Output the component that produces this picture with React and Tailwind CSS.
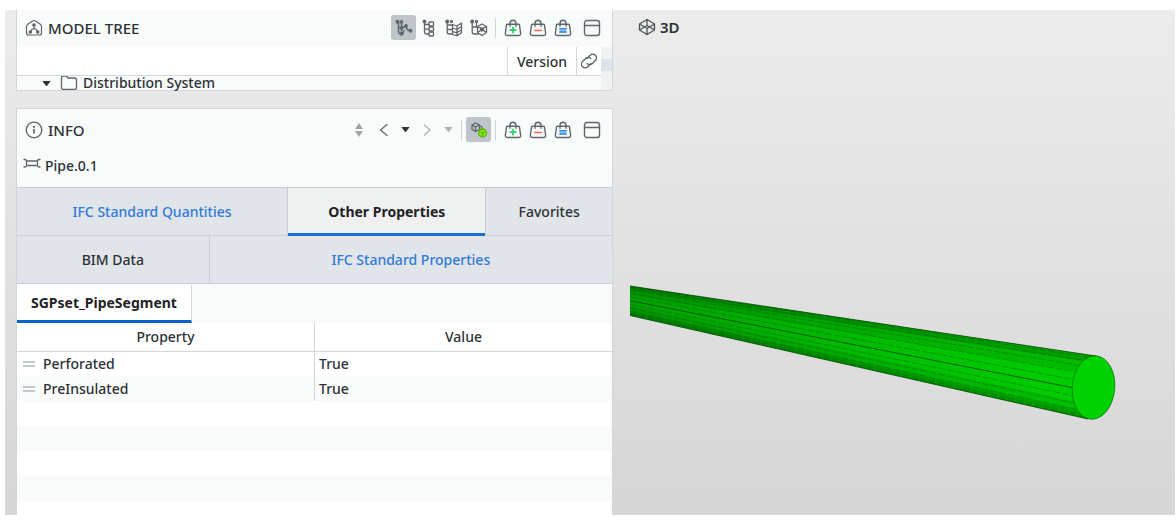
import React from 'react';
import clsx from 'clsx';

const Icon = ({ children, className = 'h-[18px] w-[18px]', strokeWidth = 1.3 }) => (
    <svg
        viewBox="0 0 18 18"
        fill="none"
        stroke="currentColor"
        strokeWidth={strokeWidth}
        strokeLinecap="round"
        strokeLinejoin="round"
        className={className}
        aria-hidden="true"
    >
        {children}
    </svg>
);

const ModelIcon = () => (
    <Icon strokeWidth={1.2}>
        <path d="M7.500 2q1.500-1 3 0l4.500 3q1.500 1 1.500 2.800v6.200q0 2-2 2h-11q-2 0-2-2V7.800q0-1.800 1.500-2.800Z" />
        <path d="M9 6.500v3M9 9.500q-3 .5-3.500 3.500M9 9.500q3 .5 3.500 3.500" />
        <circle cx="9" cy="6" r="1.200" fill="currentColor" />
        <circle cx="5.300" cy="13" r="1.200" fill="currentColor" />
        <circle cx="12.700" cy="13" r="1.200" fill="currentColor" />
    </Icon>
);

const InfoIcon = () => (
    <Icon>
        <circle cx="9" cy="9" r="7.800" />
        <path d="M9 8.500v3.300" strokeWidth="1.700" />
        <circle cx="9" cy="5.800" r="0.500" fill="currentColor" />
    </Icon>
);

const TreeContainmentIcon = () => (
    <Icon strokeWidth={1.5}>
        <circle cx="2.500" cy="2.800" r="1.300" fill="currentColor" />
        <circle cx="6.500" cy="2.800" r="1.100" />
        <path d="M3.500 4v8.500q0 2 2 2.500M3.500 8.500h2.500M6.500 4v8" />
        <circle cx="6.700" cy="9" r="1.100" fill="currentColor" />
        <circle cx="6.700" cy="14.800" r="1.200" fill="currentColor" />
        <path d="M7.500 8.500 11 7M11 7q0 4 4 4.500M7.500 14.500l1.500-3" />
        <circle cx="11" cy="7" r="1.200" fill="currentColor" />
        <circle cx="15.500" cy="11.700" r="1.200" fill="currentColor" />
    </Icon>
);

const TreeLayersIcon = () => (
    <Icon>
        <circle cx="4.500" cy="2.500" r="1.300" fill="currentColor" />
        <path d="M4.500 4v9q0 2 2 2h2.500M4.500 5.500H9M4.500 10.200H9" />
        <rect x="9" y="3" width="4.500" height="4" rx="0.800" />
        <rect x="9" y="8" width="4.500" height="4" rx="0.800" />
        <rect x="9" y="13" width="4.500" height="4" rx="0.800" />
    </Icon>
);

const TreeTypesIcon = () => (
    <Icon>
        <circle cx="2.200" cy="2.500" r="1.300" fill="currentColor" />
        <circle cx="6.500" cy="2.500" r="1" />
        <path d="M2.200 4v9q0 2 2 2h3M2.200 6h5M2.200 10.500h5" />
        <path d="M7.500 5.500 12 7l4.500-3v3.500L12 10.500 7.500 9ZM7.500 9v3.500L12 13.800l4.500-3V7.500M7.500 12.500v3l4.500 1.300 4.500-3v-3M12 7v9.500" />
    </Icon>
);

const TreeSystemIcon = () => (
    <Icon>
        <circle cx="2.200" cy="2.500" r="1.300" fill="currentColor" />
        <circle cx="6.500" cy="2.500" r="1" />
        <path d="M2.200 4v9q0 2 2 2h4M2.200 8h5M6.500 3.500v4" />
        <path d="M12 5 16.500 7.500v6L12 16.500 7.500 13.500v-6ZM7.500 7.500 12 10l4.500-2.500M7.500 13.500 12 10.500l4.500 3" />
        <circle cx="12" cy="10.500" r="1.500" fill="currentColor" />
    </Icon>
);

const BASKET_MARKS = {
    add: <path d="M9 8.300v5.400M6.300 11h5.400" stroke="#35cf70" strokeWidth="1.800" />,
    remove: <path d="M6 11.500h6" stroke="#ee6055" strokeWidth="1.700" />,
    set: (
        <>
            <rect x="5.500" y="9" width="7" height="5" fill="#7db8f3" stroke="none" />
            <path d="M5.700 9.500h6.600M5.700 13h6.600" stroke="#2c7fd8" strokeWidth="1.200" />
        </>
    ),
};

const BasketIcon = ({ mark }) => (
    <Icon strokeWidth={1.4}>
        <path d="M3.500 5.200h11q.8 0 1 .9l1.100 7.900q.3 2.500-2 2.500H3.400q-2.300 0-2-2.500l1.100-7.900q.2-.9 1-.9Z" />
        <path d="M6 7.200V4.500Q6 1.300 9 1.300t3 3.200v2.700" />
        {BASKET_MARKS[mark]}
    </Icon>
);

const WindowIcon = () => (
    <Icon strokeWidth={1.4}>
        <rect x="1.500" y="1.500" width="15" height="15" rx="2.500" />
        <path d="M1.500 6.500h15" />
    </Icon>
);

const LinkIcon = () => (
    <Icon strokeWidth={1.4}>
        <path d="m7 6.500 3.200-3.200a3.600 3.600 0 0 1 5.200 5.200l-3 3a3.600 3.600 0 0 1-5.200 0" />
        <path d="m11 11.500-3.200 3.200a3.600 3.600 0 0 1-5.200-5.200l3-3a3.600 3.600 0 0 1 5.200 0" />
    </Icon>
);

const CubeIcon = () => (
    <Icon>
        <path d="M9 1.500 16.500 6v6L9 16.500 1.500 12V6ZM1.500 6 9 10.500 16.500 6M1.500 12 9 7.500l7.500 4.500M9 1.500v6M9 10.500v6" />
    </Icon>
);

const FolderIcon = () => (
    <Icon>
        <path d="M1.500 4q0-2 2-2h3l1.500 2h6.500q2 0 2 2v7.500q0 2-2 2h-11q-2 0-2-2Z" />
    </Icon>
);

const PipeIcon = () => (
    <Icon>
        <path d="M3.500 6h11M3.500 10.500h11M1 4.500h1q1.500 0 1.500 1.500v4.500q0 1.500-1.500 1.500H1M17 4.500h-1q-1.500 0-1.500 1.500v4.500q0 1.500 1.500 1.500h1" />
    </Icon>
);

const SelectionIcon = () => (
    <Icon>
        <path d="M5.500 2 9.500 4v4.500l-4 2-3.500-2V4ZM2 4l3.500 2 4-2M5.500 6v4.500M9 4.500l3 1.500v3" />
        <circle cx="12.500" cy="12" r="4" fill="#7de315" stroke="#58b80b" />
        <path d="m10.500 11 2 1 2-1M12.500 12v2.500" stroke="#4c9f0b" strokeWidth="0.800" />
    </Icon>
);

const Caret = ({ className }) => (
    <svg viewBox="0 0 10 8" className={clsx('h-[7px] w-[9px]', className)} fill="currentColor" aria-hidden="true">
        <path d="M1 1h8q.8 0 .4.700L5.600 6.700q-.6.700-1.200 0L.6 1.700Q.2 1 1 1Z" />
    </svg>
);

const ToolButton = ({ label, active = false, narrow = false, className, children }) => (
    <button
        type="button"
        aria-label={label}
        title={label}
        className={clsx(
            'flex h-[25px] items-center justify-center rounded-[3px]',
            narrow ? 'w-[18px]' : 'w-[25px]',
            active && 'bg-[#bfc4cb]',
            className
        )}
    >
        {children}
    </button>
);

const Separator = () => <span className="mx-1 h-5 w-px bg-[#cfd3d8]" />;

const BasketTools = () => (
    <>
        <ToolButton label="Add to selection basket"><BasketIcon mark="add" /></ToolButton>
        <ToolButton label="Remove from selection basket"><BasketIcon mark="remove" /></ToolButton>
        <ToolButton label="Set selection basket"><BasketIcon mark="set" /></ToolButton>
        <ToolButton label="Float window" className="ml-1"><WindowIcon /></ToolButton>
    </>
);

const PanelHeader = ({ icon, title, className, children }) => (
    <header className={clsx('flex items-center bg-[#f9fbfa] px-2 text-[#5f666c]', className)}>
        {icon}
        <h2 className="ml-[5px] text-[15px] leading-5 font-medium text-[#2c3236]">{title}</h2>
        <div className="ml-auto flex items-center">{children}</div>
    </header>
);

const ModelTree = () => (
    <section className="border border-t-0 border-[#d3d7dc] bg-white">
        <PanelHeader icon={<ModelIcon />} title="MODEL TREE" className="h-[37px] pb-[2px]">
            <ToolButton label="Containment" active><TreeContainmentIcon /></ToolButton>
            <ToolButton label="Component"><TreeLayersIcon /></ToolButton>
            <ToolButton label="Layer"><TreeTypesIcon /></ToolButton>
            <ToolButton label="System"><TreeSystemIcon /></ToolButton>
            <Separator />
            <BasketTools />
        </PanelHeader>
        <div className="flex">
            <div className="min-w-0 flex-1">
                <div className="flex h-[29px] border-b border-[#d3d7dc] text-sm font-medium">
                    <div className="flex-1" />
                    <div className="flex w-[69px] items-center justify-center border-l border-[#d3d7dc] pt-[2px]">Version</div>
                    <div className="flex w-[25px] items-center justify-center border-l border-[#d3d7dc] text-[#5f666c]">
                        <LinkIcon />
                    </div>
                </div>
                <div className="flex h-[14px] items-center bg-[#f9fbfa] pl-[25px]">
                    <button type="button" aria-label="Collapse Distribution System">
                        <Caret />
                    </button>
                    <span className="ml-[9px] flex h-[14px] items-center overflow-hidden text-[#5f666c]"><FolderIcon /></span>
                    <span className="ml-[5px] text-sm leading-4 font-medium">Distribution System</span>
                </div>
            </div>
            <div className="w-[11px] bg-[#f0f1f1] pt-3">
                <div className="h-3 bg-[#dfe2e7]" />
            </div>
        </div>
    </section>
);

const Tab = ({ className, active = false, link = false, children }) => (
    <button
        type="button"
        role="tab"
        aria-selected={active}
        className={clsx(
            'h-12 border-[#c9cdd3] text-sm',
            active ? 'border-b-[3px] border-b-[#1b6fd0] bg-[#eff0f0] pt-[2px] font-bold text-[#1f2326]' : 'border-b bg-[#e1e4e9] font-medium',
            link && 'text-[#2f7bd6]',
            className
        )}
    >
        {children}
    </button>
);

const properties = [
    { name: 'Perforated', value: 'True' },
    { name: 'PreInsulated', value: 'True' },
];

const PropertyTable = () => (
    <table className="w-full table-fixed border-collapse text-sm">
        <thead>
            <tr className="h-7 border-b border-[#d3d7dc]">
                <th className="w-1/2 border-r border-[#d3d7dc] p-0 font-medium">Property</th>
                <th className="p-0 font-medium">Value</th>
            </tr>
        </thead>
        <tbody>
            {properties.map((property) => (
                <tr key={property.name} className="h-[25px] font-medium even:bg-[#f9fbfa]">
                    <td className="border-r border-[#d3d7dc] p-0 pl-[6px]">
                        <span className="flex items-center gap-2">
                            <span className="h-[6px] w-3 border-y-2 border-[#c5c8cb]" />
                            {property.name}
                        </span>
                    </td>
                    <td className="p-0 pl-1">{property.value}</td>
                </tr>
            ))}
            {[0, 1, 2, 3].map((row) => (
                <tr key={row} className="h-[25px] even:bg-[#f9fbfa]">
                    <td colSpan={2} className="p-0" />
                </tr>
            ))}
        </tbody>
    </table>
);

const InfoPanel = () => (
    <section className="flex-1 border border-b-0 border-[#d3d7dc] bg-white">
        <PanelHeader icon={<InfoIcon />} title="INFO" className="h-[41px]">
            <ToolButton label="Expand or collapse">
                <svg viewBox="0 0 10 14" className="h-[14px] w-[10px] text-[#a3a6a9]" fill="currentColor" aria-hidden="true">
                    <path d="M5 0 9 6H1ZM5 14 1 8h8Z" />
                </svg>
            </ToolButton>
            <ToolButton label="Back"><Icon><path d="M12 3.500 5.500 9l6.500 5.500" /></Icon></ToolButton>
            <ToolButton label="Back history" narrow><Caret className="text-[#2c3236]" /></ToolButton>
            <ToolButton label="Forward" className="text-[#aeb1b4]"><Icon><path d="m6.500 4 5.500 5-5.500 5" /></Icon></ToolButton>
            <ToolButton label="Forward history" narrow className="text-[#aeb1b4]"><Caret /></ToolButton>
            <Separator />
            <ToolButton label="Follow selection" active><SelectionIcon /></ToolButton>
            <Separator />
            <BasketTools />
        </PanelHeader>
        <div className="flex h-[37px] items-center gap-1 bg-[#f9fbfa] pb-[10px] pl-[6px] text-[#5f666c]">
            <PipeIcon />
            <span className="pt-1 text-sm font-medium text-[#2c3236]">Pipe.0.1</span>
        </div>
        <div role="tablist" aria-label="Property groups" className="border-t border-[#c9cdd3] pb-px">
            <div className="flex">
                <Tab link className="flex-[271] border-r">IFC Standard Quantities</Tab>
                <Tab active className="flex-[198]">Other Properties</Tab>
                <Tab className="flex-[126] border-l">Favorites</Tab>
            </div>
            <div className="flex">
                <Tab className="flex-[192] border-r">BIM Data</Tab>
                <Tab link className="flex-[403]">IFC Standard Properties</Tab>
            </div>
        </div>
        <div role="tablist" aria-label="Property sets" className="flex bg-[#f9fbfa]">
            <button
                type="button"
                role="tab"
                aria-selected="true"
                className="h-[38px] border-r border-b-[3px] border-r-[#d3d7dc] border-b-[#0a62c8] bg-white px-[14px] text-sm font-bold text-[#1f2326]"
            >
                SGPset_PipeSegment
            </button>
        </div>
        <PropertyTable />
    </section>
);

// Edge lines of the cylinder, every 15 degrees from the top tangent to the bottom one
const facets = Array.from({ length: 11 }, (_, i) => {
    const angle = ((i + 1) * Math.PI) / 12;
    return {
        startY: 254.7 - 14.7 * Math.cos(angle),
        endX: 464.5 - 21.5 * Math.sin(angle),
        endY: 341.5 - 31.5 * Math.cos(angle),
        main: i === 5,
    };
});

const Viewport = () => (
    <section className="flex min-w-0 flex-[546] flex-col">
        <header className="flex h-9 items-center gap-1 pb-[2px] pl-[9px] text-[#4d5459]">
            <CubeIcon />
            <h2 className="text-[15px] leading-5 font-semibold text-[#2c3236]">3D</h2>
        </header>
        <svg viewBox="0 0 546 469" preserveAspectRatio="xMinYMin meet" className="w-full" role="img" aria-label="Pipe segment">
            <defs>
                <linearGradient id="pipeLength" x1="0" x2="1" y1="0" y2="0">
                    <stop offset="0" stopColor="#00a000" />
                    <stop offset="0.6" stopColor="#00c000" />
                    <stop offset="1" stopColor="#00cf00" />
                </linearGradient>
            </defs>
            <path d="M1 240 467 310 459 373 1 269.500Z" fill="url(#pipeLength)" />
            <path d="M1 240 467 310 453 315 1 244Z" fill="#003c00" opacity="0.3" />
            <path d="M1 244 453 315 446 325 1 249Z" fill="#003c00" opacity="0.12" />
            <path d="M1 269.500 459 373 448 364 1 265Z" fill="#003c00" opacity="0.3" />
            <path d="M1 265 448 364 445 355 1 260Z" fill="#003c00" opacity="0.1" />
            {facets.map((facet) => (
                <line
                    key={facet.endY}
                    x1="1"
                    y1={facet.startY}
                    x2={facet.endX}
                    y2={facet.endY}
                    stroke="#004a00"
                    strokeWidth={facet.main ? 0.9 : 0.7}
                    strokeDasharray={facet.main ? undefined : '7 2'}
                    opacity={facet.main ? 0.9 : 0.5}
                />
            ))}
            <path d="M1 240 467 310M1 269.500 459 373" stroke="#004d00" strokeWidth="0.8" />
            <ellipse cx="464.5" cy="341.5" rx="21.3" ry="31.8" fill="#00d200" stroke="#006b00" strokeWidth="0.7" transform="rotate(5 464.5 341.5)" />
        </svg>
    </section>
);

export default function App() {
    return (
        <div className="flex min-h-screen bg-white pt-[10px] pr-px pb-[7px] pl-[5px] font-['Noto_Sans','Open_Sans',sans-serif] text-[#2c3236]">
            <main className="flex flex-1 gap-4 bg-linear-to-b from-[#ececec] to-[#d6d6d6] pl-[11px]">
                <div className="flex min-w-0 flex-[597] flex-col gap-[17px]">
                    <ModelTree />
                    <InfoPanel />
                </div>
                <Viewport />
            </main>
        </div>
    );
}
